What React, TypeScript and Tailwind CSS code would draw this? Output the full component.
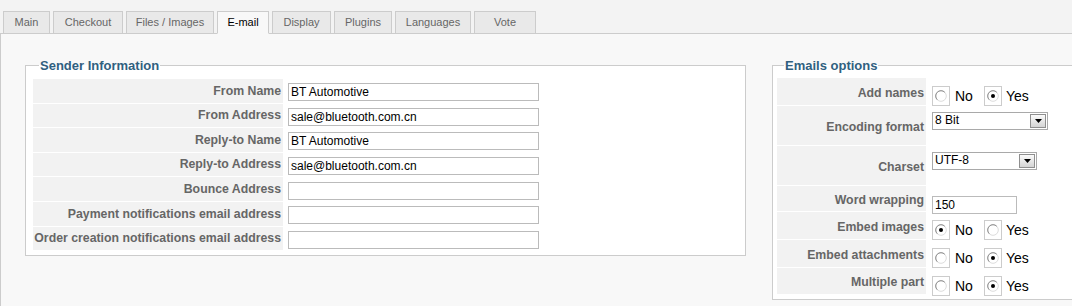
import React from 'react';

const tabs = [
  { label: 'Main', w: 'w-[47px]' },
  { label: 'Checkout', w: 'w-[70px]' },
  { label: 'Files / Images', w: 'w-[88px]' },
  { label: 'E-mail', w: 'w-[52px]', active: true },
  { label: 'Display', w: 'w-[59px]' },
  { label: 'Plugins', w: 'w-[58px]' },
  { label: 'Languages', w: 'w-[76px]' },
  { label: 'Vote', w: 'w-[62px]' },
];

const senderRows = [
  { label: 'From Name', value: 'BT Automotive' },
  { label: 'From Address', value: 'sale@bluetooth.com.cn' },
  { label: 'Reply-to Name', value: 'BT Automotive' },
  { label: 'Reply-to Address', value: 'sale@bluetooth.com.cn' },
  { label: 'Bounce Address', value: '' },
  { label: 'Payment notifications email address', value: '' },
  { label: 'Order creation notifications email address', value: '' },
];

const RadioDot = ({ checked }: { checked: boolean }) => (
  <svg width="12" height="12" viewBox="0 0 12 12">
    <circle cx="6" cy="6" r="5.3" fill="#fff" stroke="#dcdcdc" />
    <path d="M2.25 9.75 A5.3 5.3 0 0 1 9.75 2.25" fill="none" stroke="#8c8c8c" />
    {checked && <circle cx="6" cy="6" r="2" fill="#000" />}
  </svg>
);

const RadioPair = ({ yes }: { yes: boolean }) => (
  <div className="flex items-center">
    <div className="w-[18px] h-[20px] border border-[#cccccc] bg-white flex items-center justify-center">
      <RadioDot checked={!yes} />
    </div>
    <span className="ml-[5px] mr-[11px] pt-[2px] text-[14px] text-black">No</span>
    <div className="w-[18px] h-[20px] border border-[#cccccc] bg-white flex items-center justify-center">
      <RadioDot checked={yes} />
    </div>
    <span className="ml-[4px] pt-[2px] text-[14px] text-black">Yes</span>
  </div>
);

const FakeSelect = ({ value, w }: { value: string; w: string }) => (
  <div className={`${w} h-[18px] border border-[#a9a9a9] bg-white flex items-start justify-between`}>
    <span className="pl-[2px] text-[12px] leading-[15px] text-black">{value}</span>
    <div className="w-[16px] h-[14px] m-px border border-[#8f8f8f] bg-linear-to-b from-[#fbfbfb] to-[#d4d4d4] flex items-center justify-center">
      <svg width="7" height="4" viewBox="0 0 7 4">
        <path d="M0 0 H7 L3.5 4 Z" fill="#000" />
      </svg>
    </div>
  </div>
);

const optionRows: { label: string; h: string; value: React.ReactNode }[] = [
  { label: 'Add names', h: 'h-[27px]', value: <RadioPair yes /> },
  { label: 'Encoding format', h: 'h-[39px]', value: <FakeSelect value="8 Bit" w="w-[116px]" /> },
  { label: 'Charset', h: 'h-[39px]', value: <FakeSelect value="UTF-8" w="w-[105px]" /> },
  {
    label: 'Word wrapping',
    h: 'h-[25px]',
    value: (
      <input
        readOnly
        value="150"
        className="w-[85px] h-[18px] border border-[#bbbbbb] bg-white px-[2px] text-[12px] text-black outline-none"
      />
    ),
  },
  { label: 'Embed images', h: 'h-[27px]', value: <RadioPair yes={false} /> },
  { label: 'Embed attachments', h: 'h-[27px]', value: <RadioPair yes /> },
  { label: 'Multiple part', h: 'h-[26px]', value: <RadioPair yes /> },
];

export default function App() {
  return (
    <div className="w-[1072px] h-[306px] overflow-hidden bg-[#f3f3f3] font-['Liberation_Sans',Arial,sans-serif]">
      {/* tabs */}
      <div className="relative z-10 -mb-px flex gap-[3px] pl-[3px] pt-[11px]">
        {tabs.map((t) => (
          <div
            key={t.label}
            className={`${t.w} h-[23px] border border-[#cccccc] flex items-center justify-center text-[11px] ${
              t.active ? 'bg-[#f8f8f8] border-b-[#f8f8f8] text-black' : 'bg-[#e9e9e9] text-[#666666]'
            }`}
          >
            {t.label}
          </div>
        ))}
      </div>

      <div className="h-full border-t border-l border-[#cccccc] bg-[#f8f8f8] flex items-start gap-[26px] pl-[24px] pt-[24px]">
        {/* sender information */}
        <fieldset className="w-[721px] shrink-0 border border-[#cccccc] bg-white pl-[7px] pt-[6px] pb-[5px]">
          <legend className="ml-[6px] px-px text-[13px] leading-[15px] font-bold text-[#30607f]">
            Sender Information
          </legend>
          <div className="flex flex-col gap-px">
            {senderRows.map((r) => (
              <div key={r.label} className="flex h-[23.6px]">
                <div className="w-[250px] bg-[#f2f2f2] flex items-center justify-end pr-[2px] text-[12.3px] font-bold text-[#666666]">
                  {r.label}
                </div>
                <div className="flex items-center pl-[5px] pt-[3px]">
                  <input
                    readOnly
                    value={r.value}
                    className="w-[251px] h-[18px] border border-[#bbbbbb] bg-white px-[2px] text-[12px] text-black outline-none"
                  />
                </div>
              </div>
            ))}
          </div>
        </fieldset>

        {/* emails options */}
        <fieldset className="w-[320px] shrink-0 border border-[#cccccc] bg-white pl-[4px] pt-[5px] pb-[5px]">
          <legend className="ml-[7px] px-px text-[13px] leading-[15px] font-bold text-[#30607f]">
            Emails options
          </legend>
          <div className="flex flex-col gap-px">
            {optionRows.map((r) => (
              <div key={r.label} className={`flex ${r.h}`}>
                <div className="w-[149px] shrink-0 bg-[#f2f2f2] flex items-center justify-end pr-[2px] pt-[3px] text-[12.3px] font-bold text-[#666666]">
                  {r.label}
                </div>
                <div className="pl-[6px] pt-[6px]">{r.value}</div>
              </div>
            ))}
          </div>
        </fieldset>
      </div>
    </div>
  );
}
